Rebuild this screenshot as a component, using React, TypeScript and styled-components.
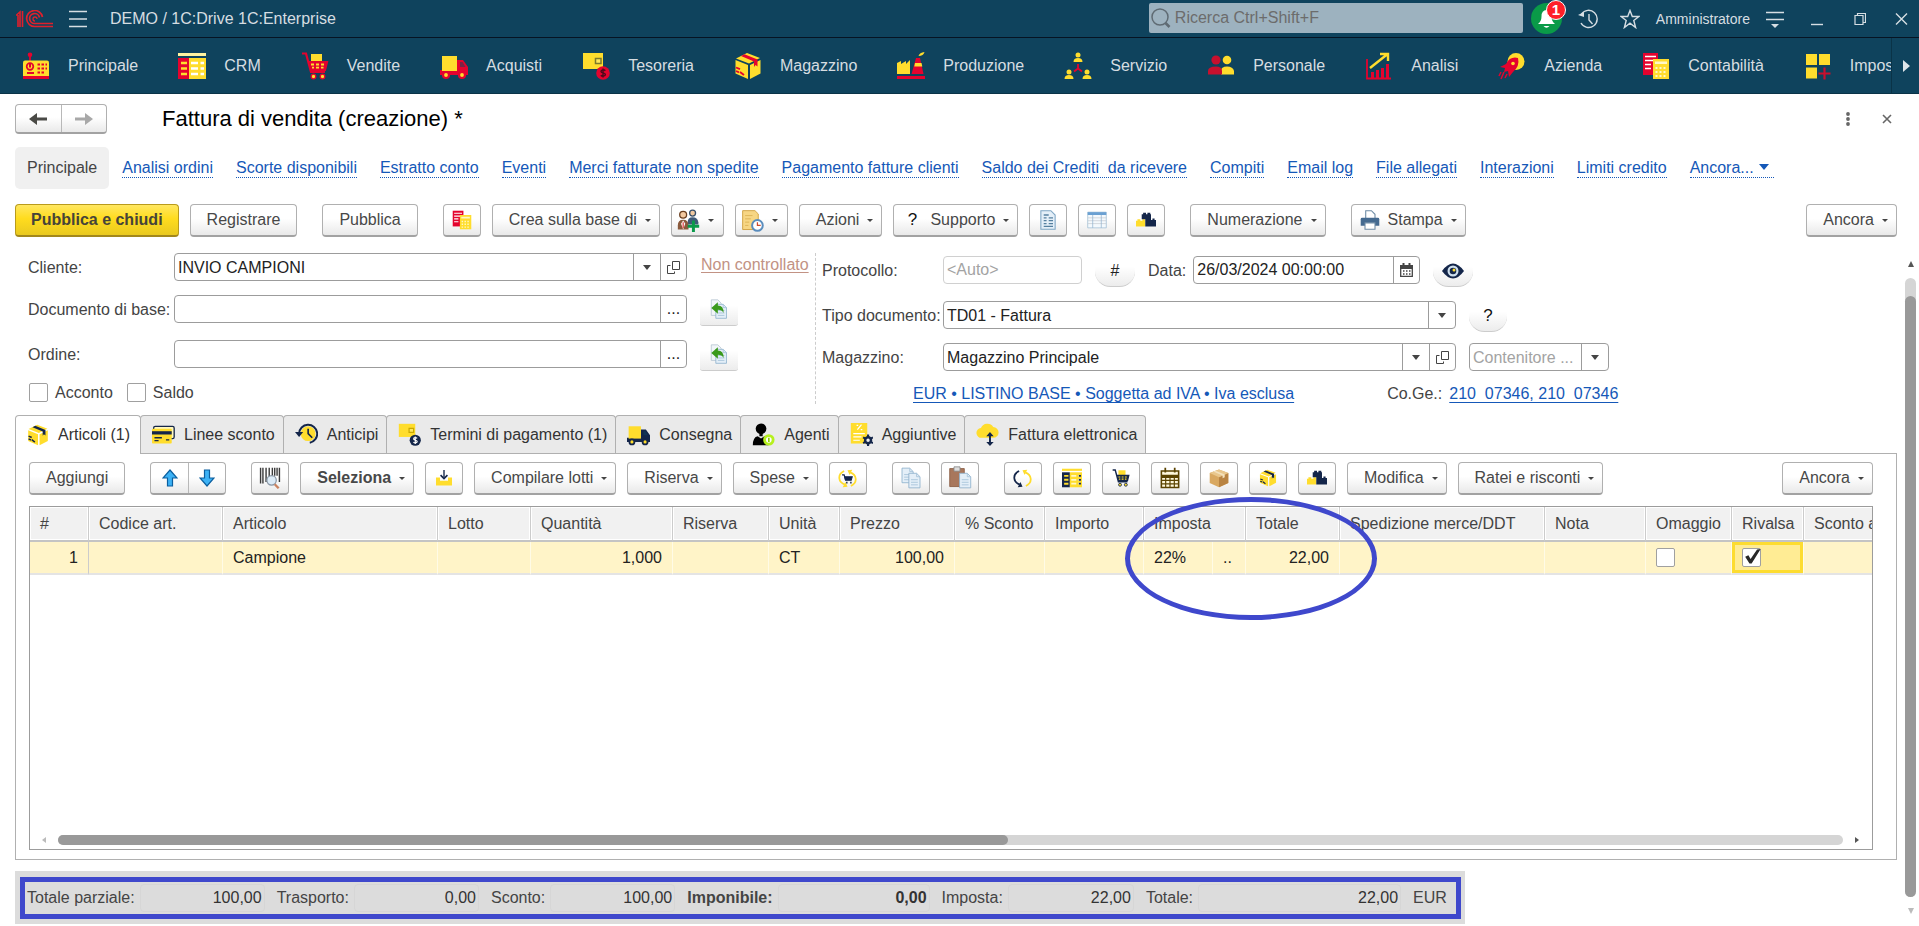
import React from "react";
import styled, { createGlobalStyle, css } from "styled-components";

const Y = "#ffdd2d";
const R = "#e4032e";
const N = "#14264a";
const BAR = "#0f435d";
const LINK = "#1558b8";

const GlobalStyle = createGlobalStyle`
  *, *::before, *::after { box-sizing: border-box; }
  body { margin: 0; background: #fff; overflow-x: hidden; }
  body, button, input, select, table { font-family: "Liberation Sans", Arial, sans-serif; font-size: 16px; color: #444; }
  svg { display: block; flex: none; }
`;

/* ---------- icons ---------- */

type Pal = { a?: string; b?: string };
type IconProps = Pal & { s?: number };

const Svg = ({ s = 28, children }: { s?: number; children: React.ReactNode }) => (
  <svg width={s} height={s} viewBox="0 0 28 28" fill="none" aria-hidden="true">{children}</svg>
);

const BoxIcon = ({ s, a = Y, b = R }: IconProps) => (
  <Svg s={s}>
    <path d="M13 1 26 6 15 11.500 2 6.500Z" fill={a} />
    <path d="M1.500 8 14 13v14L1.500 21.500Z" fill={a} />
    <path d="M16 13 26.500 8v13.500L16 27Z" fill={a} />
    <path d="M7 4 10.500 2.300 23.500 7.500v7l-2-1.500-1.500 2V9.500Z" fill={b} />
    <path d="M2 15.500l4 1.700M2 19l3 1.300M6 20l4 3" stroke={b} strokeWidth="1.900" />
  </Svg>
);
const TruckIcon = ({ s, a = Y, b = R }: IconProps) => (
  <Svg s={s}>
    <path d="M0 18h17V8h6l5 7v8H0Z" fill={b} />
    <path d="M2 4h15v15H2Z" fill={a} />
    <path d="M20 10h2.500l3 5H20Z" fill={BAR} opacity=".5" />
    <circle cx="6" cy="23" r="3" fill={a} stroke={b} strokeWidth="2.200" />
    <circle cx="22" cy="23" r="3" fill={a} stroke={b} strokeWidth="2.200" />
  </Svg>
);
const CartIcon = ({ s, a = Y, b = R }: IconProps) => (
  <Svg s={s}>
    <path d="M10 2h11v8H10Z" fill={a} />
    <path d="M1 1.500h4l5 18.500h14M7.500 10H26l-2 8H10" stroke={b} strokeWidth="2.200" />
    <path d="M8 10h18l-2 8H10Z" fill={b} />
    <path d="M10 12.500h3M15 12.500h3M20 12.500h3M11 15.700h2M15 15.700h3M20 15.700h2.500" stroke={a} strokeWidth="1.800" />
    <circle cx="12.500" cy="24.500" r="2.300" fill={a} stroke={b} strokeWidth="1.300" />
    <circle cx="21.500" cy="24.500" r="2.300" fill={a} stroke={b} strokeWidth="1.300" />
  </Svg>
);
const WalletIcon = ({ s, a = Y, b = R }: IconProps) => (
  <Svg s={s}>
    <path d="M1 1h20v16H1Z" fill={a} />
    <path d="M13.500 6.500h5.500v5h-5.500Z" fill="#ffe85c" stroke={b === R ? "#7d7a2a" : "#c9a900"} strokeWidth="1.500" />
    <circle cx="21" cy="21" r="6.800" fill={b} />
    <path d="M23.300 18.700c-1-1.300-4.300-1.200-4.300.7 0 1.900 4.400 1.200 4.400 3.200s-3.500 2-4.600.6M21 16.500v9" stroke={b === R ? "#4b0a1a" : "#fff"} strokeWidth="1.400" />
  </Svg>
);
const ListIcon = ({ s, a = Y, b = R }: IconProps) => (
  <Svg s={s}>
    <path d="M0 1h28v3H0Z" fill={b === R ? "#fff3a0" : a} />
    <path d="M0 6h11v21H0Z" fill={b} />
    <path d="M11 6h17v21H11Z" fill={a} />
    <path d="M3 11h6M3 16.500h6M3 22h6" stroke={a} strokeWidth="2.600" />
    <path d="M13 11h7M13 16.500h7M13 22h7M22.500 11H26M22.500 16.500H26M22.500 22H26" stroke={b === R ? "#fff" : "#fff8c8"} strokeWidth="2.400" />
    {b !== R && <path d="M23.500 11h3M23.500 16.500h3M23.500 22h3" stroke={b} strokeWidth="2.400" />}
  </Svg>
);
const DocCalcIcon = ({ s, a = Y, b = R }: IconProps) => (
  <Svg s={s}>
    <path d="M1 1h15v22H1Z" fill={b} />
    <path d="M3 4.500h11M3 8.500h11M3 12.500h6M3 16.500h6" stroke="#fff" strokeWidth="1.600" />
    <path d="M11 7h16v20H11Z" fill={a} />
    <path d="M13 9.500h12v2.500H13ZM13.500 15h2v2h-2zM17.500 15h2v2h-2zM21.500 15h2v2h-2zM13.500 19h2v2h-2zM17.500 19h2v2h-2zM21.500 19h2v2h-2zM13.500 23h2v2h-2zM17.500 23h2v2h-2zM21.500 23h2v2h-2z" fill="#fff8c8" />
  </Svg>
);
const DashboardIcon = () => (
  <Svg>
    <path d="M8 2v7" stroke={R} strokeWidth="1.800" />
    <circle cx="8" cy="2.800" r="2.300" fill={R} />
    <path d="M1 10.500q0-2 2-2h22q2 0 2 2V24H1Z" fill={Y} />
    <path d="M1 24h26v3H1Z" fill={R} />
    <circle cx="8" cy="14.500" r="3.300" stroke={R} strokeWidth="1.700" />
    <path d="M8 12v3.500M5 21h7" stroke={R} strokeWidth="2" />
    <path d="M15.500 12.500h2.500M19.500 12.500H22M23.500 12.500H25M15.500 16.500h2.500M19.500 16.500H22M23.500 16.500H25M15.500 20.500h2.500M19.500 20.500H22" stroke={R} strokeWidth="2" />
  </Svg>
);
const FactoryIcon = () => (
  <Svg>
    <path d="M0 22V11l4-2v3l5-3v3l4-4v14Z" fill={Y} />
    <path d="M14.500 22 19 6h4l3.500 16Z" fill={R} />
    <path d="M18 11h6.500l.8 3.500h-8Z" fill={Y} />
    <path d="M0 24h28v3H0Z" fill={R} />
    <path d="M21.500 4q1-3.500 6-4-1 4-6 4Z" fill={Y} />
  </Svg>
);
const ServiceIcon = () => (
  <Svg>
    {[[14, 0], [5, 17], [23, 17]].map(([x, y]) => (
      <g key={x} fill={Y}>
        <circle cx={x} cy={y + 3} r="2.500" />
        <path d={`M${x - 4.500} ${y + 10}q0-4 4.500-4t4.500 4Z`} />
      </g>
    ))}
    <path d="M14 12v4.500l-4 3M14 16.500l4 3" stroke={R} strokeWidth="1.800" />
  </Svg>
);
const PeopleIcon = () => (
  <Svg>
    <circle cx="20" cy="8" r="4.300" fill={Y} />
    <path d="M14 22.500V19q0-4.500 6-4.500t7 4.500v3.500Z" fill={Y} />
    <circle cx="9" cy="8" r="4.600" fill="#c8102e" />
    <path d="M1 22.500V19q0-4.500 8-4.500 6 0 6 4.500v3.500Z" fill="#c8102e" />
  </Svg>
);
const ChartIcon = () => (
  <Svg>
    <path d="M2 7v19.500h24" stroke={R} strokeWidth="1.800" />
    <path d="M6 20h3v6H6zM11 18h3v8h-3zM16 16h3v10h-3zM21 12h3v14h-3z" fill={R} />
    <path d="M5 16 22 2.500M15 2h8v7" stroke={Y} strokeWidth="2.400" />
  </Svg>
);
const RocketIcon = () => (
  <Svg>
    <circle cx="18" cy="9.500" r="8.500" fill={Y} />
    <path d="M20 6q-8-2-12 6l-6 3 5 1-1 4 4-1 1 6 4-5q7-6 5-14Z" fill={R} />
    <circle cx="15" cy="11.500" r="1.800" fill={Y} />
    <path d="m6 20-3 7M3 20l-2 4M9 22l-2 4" stroke={R} strokeWidth="1.500" />
  </Svg>
);
const TilesIcon = () => (
  <Svg>
    <path d="M2 2h11v11H2zM15 2h11v11H15zM2 15.500h11v11H2z" fill={Y} />
    <path d="M20.500 15.500v12M14.500 21.500h12" stroke="#c8102e" strokeWidth="2.200" />
  </Svg>
);
const BricksIcon = ({ s = 20 }: IconProps) => (
  <Svg s={s}>
    <path d="M0 23v-8h2v-2h4v2h3v-2h4v10Z" fill={Y} />
    <path d="M8 13V6h2V4h4v2h2V4h4v2h1v8h2v-2h3v2h2v9H13V13Z" fill={N} />
  </Svg>
);
const CardIcon = () => (
  <Svg s={23}>
    <rect x="2" y="4" width="25" height="15" rx="2" stroke={N} strokeWidth="1.600" fill="#fff7c0" />
    <rect x="0" y="7" width="24" height="18" rx="1" fill={Y} />
    <path d="M0 10h24v4H0Z" fill={N} />
    <path d="M3 18h9M3 21.500h5M17 20.500h4" stroke={N} strokeWidth="1.700" />
  </Svg>
);
const HistoryYIcon = () => (
  <Svg s={23}>
    <circle cx="16" cy="13" r="9" fill={Y} />
    <path d="M5 13A11 11 0 1 1 18 24" stroke={N} strokeWidth="2.400" />
    <path d="M0 11h10l-5 6Z" fill={N} />
    <path d="M16 7v6l5 5" stroke={N} strokeWidth="2" />
  </Svg>
);
const AgentIcon = () => (
  <Svg s={23}>
    <circle cx="11" cy="7" r="6.500" fill="#000" />
    <path d="M9 11h4v5H9ZM1 27q0-10 6-11l4 3 4-3q5 1 5 5v6Z" fill="#000" />
    <circle cx="20.500" cy="20.500" r="5.200" fill="#fff" stroke="#b6f01e" strokeWidth="3.500" />
    <path d="M20.500 18v5" stroke="#8ccc00" strokeWidth="2" />
  </Svg>
);
const ExtraIcon = () => (
  <Svg s={23}>
    <path d="M1 0h20v25H1Z" fill={Y} />
    <path d="m9 8 5-6M8 3h2M13 8h2M4 13h14M4 17h10M4 21h8" stroke="#fff" strokeWidth="1.500" />
    <path d="M22 14v14M16 17.500l12 7M16 24.500l12-7" stroke={N} strokeWidth="2.600" />
    <circle cx="22" cy="21" r="3.600" stroke={N} strokeWidth="3" fill="#eee" />
  </Svg>
);
const CloudIcon = () => (
  <Svg s={23}>
    <path d="M7 18a6 6 0 0 1-1-12 8.500 8.500 0 0 1 15-1 6.500 6.500 0 0 1 0 13Z" fill={Y} />
    <path d="M17 13v12" stroke={N} strokeWidth="2.400" />
    <path d="m12.500 16 4.500-5 4.500 5ZM12.500 23h9L17 28Z" fill={N} />
  </Svg>
);
const ArrowVIcon = ({ down }: { down?: boolean }) => (
  <svg width="16" height="18" viewBox="0 0 16 18" aria-hidden="true">
    <path d={down ? "M5.500 1h5v8H15l-7 8-7-8h4.500Z" : "M5.500 17h5V9H15L8 1 1 9h4.500Z"} fill="#3db2f5" stroke="#0b5f9f" strokeWidth="1.200" />
  </svg>
);
const BarcodeIcon = () => (
  <Svg s={22}>
    <path d="M2 1v20M5 1v20M9 1v18M13 1v14M17 1v10M20 1v10M23 1v10M26 1v18" stroke="#3c3c3c" strokeWidth="1.800" />
    <circle cx="16" cy="17" r="6" fill="#dcebf7" stroke="#8a97a5" strokeWidth="1.600" />
    <path d="m20 22 5 5" stroke="#c98260" strokeWidth="3" />
  </Svg>
);
const DownloadIcon = () => (
  <Svg s={16}>
    <path d="M0 13h7v6h14v-6h7v14H0Z" fill={Y} />
    <path d="M14 0v13" stroke={N} strokeWidth="2.400" />
    <path d="m8 9 6 6 6-6" stroke={N} strokeWidth="2.800" />
  </Svg>
);
const RefreshIcon = ({ cart }: { cart?: boolean }) => (
  <Svg s={19}>
    <path d="M9 3Q1 7 2 14q.5 6 8 9" stroke={cart ? Y : N} strokeWidth="2.600" />
    <path d="m7 27 7-1-3-7Z" fill={cart ? Y : N} />
    <path d="M19 25q8-4 7-11-.5-6-8-9" stroke={Y} strokeWidth="2.600" />
    <path d="m21 1-7 1 3 7Z" fill={Y} />
    {cart && (
      <g stroke={N}>
        <path d="M6 8.500h3l2 7" strokeWidth="1.800" />
        <path d="M10 11.500h11l-1.500 5H11Z" fill={N} strokeWidth="1.500" />
        <path d="M12 20h2M18 20h2" strokeWidth="2.400" />
      </g>
    )}
  </Svg>
);
const Sheet = ({ x, y }: { x: number; y: number }) => (
  <g transform={`translate(${x} ${y})`}>
    <path d="M.5.500h9l4 4v13H.5Z" fill="#e4eff8" stroke="#8fb2cd" />
    <path d="M9.500.500v4h4M3 8h8M3 11h8M3 14h8" stroke="#a5c2d8" />
  </g>
);
const CopyIcon = () => <Svg s={24}><Sheet x={3} y={2} /><Sheet x={11} y={8} /></Svg>;
const PasteIcon = () => (
  <Svg s={24}>
    <path d="M2 3h17v21H2Z" fill="#a8775c" stroke="#8b5d44" />
    <path d="M7 1h7v5H7Z" fill="#ddd" stroke="#888" />
    <Sheet x={13} y={8} />
  </Svg>
);
const DocIcon = () => (
  <Svg s={20}>
    <path d="M4 1h14l6 6v20H4Z" fill="#e4eff8" stroke="#7fa6c4" strokeWidth="1.500" />
    <path d="M8 7h7M8 11h4M15 11h6M8 15h4M15 15h6M8 19h4M15 19h6M8 23h13" stroke="#55809f" strokeWidth="1.800" />
  </Svg>
);
const GridIcon = () => (
  <Svg s={20}>
    <path d="M1 3h26v22H1Z" fill="#f4f9fd" stroke="#9ab8d0" />
    <path d="M1 3h26v4H1Z" fill="#6aa0d2" />
    <path d="M1 11h26M1 15h26M1 19h26" stroke="#c6cbd2" />
    <path d="M8 7v18M20 7v18" stroke="#8fb2cd" />
  </Svg>
);
const CalendarIcon = () => (
  <Svg s={22}>
    <path d="M3 5h22v6H3ZM3 13h22v13H3Z" stroke="#5b4300" strokeWidth="2" fill="#fff8dc" />
    <path d="M8 1v6M20 1v6" stroke="#5b4300" strokeWidth="2.200" />
    <path d="M3 17h22M3 21.500h22M8.500 13v13M14 13v13M19.500 13v13" stroke="#5b4300" strokeWidth="1.500" />
  </Svg>
);
const ParcelIcon = () => (
  <Svg s={20}>
    <path d="M14 2 27 7v14l-13 6L1 21V7Z" fill="#d9a860" />
    <path d="m14 13 13-6v14l-13 6Z" fill="#b98443" />
    <path d="M14 2 27 7l-13 6L1 7Z" fill="#e9c78c" />
    <path d="m6 5 13 5.500v4l3-1.500V9L9 4Z" fill="#f4e2bd" />
  </Svg>
);
const UsersAddIcon = () => (
  <Svg s={23}>
    <circle cx="19" cy="5" r="3.600" fill="#f0c8a0" stroke="#39506a" strokeWidth="1.600" />
    <path d="M13 19v-3q0-6 6-6t7 6v3Z" fill="#3f5a78" />
    <circle cx="7.500" cy="7" r="4.200" fill="#f3c9a0" stroke="#6b3f20" strokeWidth="1.600" />
    <path d="M1 25v-5q0-7 6.500-7t6.500 7v5Z" fill="#8a5a3c" />
    <path d="m7.500 14 2.500 4-2.500 7L5 18Z" fill="#fff" />
    <path d="M7.500 16v7" stroke="#d33" strokeWidth="1.400" />
    <path d="M20 14v14M13 21h14" stroke="#0a9a4a" strokeWidth="3.600" />
  </Svg>
);
const ScrollClockIcon = () => (
  <Svg s={23}>
    <path d="M2 2h15l4 4v19H2Z" fill="#f7d684" stroke="#d2a548" strokeWidth="1.200" />
    <path d="M5 8h9M5 12h7M5 16h5M5 20h4" stroke="#d9ae50" />
    <circle cx="20" cy="20" r="6.500" fill="#fff" stroke="#5a8dbd" strokeWidth="2.400" />
    <path d="M20 16v4h4" stroke="#d04a2a" strokeWidth="1.500" />
  </Svg>
);
const PrinterIcon = () => (
  <Svg s={20}>
    <path d="M8 1h8l5 5v7H8Z" fill="#fff" stroke="#6d8ba5" strokeWidth="1.500" />
    <path d="M1 13q0-2 2-2h22q2 0 2 2v9H1Z" fill="#446a90" />
    <path d="M7 18h14v9H7Z" fill="#fff" stroke="#6d8ba5" strokeWidth="1.500" />
  </Svg>
);
const DocBackIcon = () => (
  <Svg s={23}>
    <path d="M4 1h8l4 4v15H4Z" fill="#f1f5f8" stroke="#b7c6d2" />
    <Sheet x={9} y={6} />
    <path d="M4 11 12 4v4q7 0 7 9-2-4-7-4v5Z" fill="#3a9a1c" />
  </Svg>
);
const EyeIcon = () => (
  <svg width="22" height="16" viewBox="0 0 22 16" aria-hidden="true">
    <path d="M0 8Q11-7 22 8 11 23 0 8Z" fill={N} />
    <circle cx="11" cy="8" r="5.500" fill="#cfe0ee" />
    <circle cx="11" cy="8" r="3.300" fill={N} />
    <circle cx="12" cy="7" r="1.500" fill={Y} />
  </svg>
);
const MiniCalIcon = () => (
  <svg width="13" height="14" viewBox="0 0 13 14" fill="none" aria-hidden="true">
    <path d="M.7 3h11.600v10.300H.7Z" stroke="#444" strokeWidth="1.300" />
    <path d="M0 2h13v4H0ZM2.500 0h2v3h-2zM8.500 0h2v3h-2z" fill="#444" />
    <path d="M3 8h1.500M6 8h1.500M9 8h1.500M3 11h1.500M6 11h1.500M9 11h1.500" stroke="#444" strokeWidth="1.500" />
  </svg>
);
const OpenIcon = () => (
  <svg width="13" height="13" viewBox="0 0 13 13" fill="none" stroke="#444" aria-hidden="true">
    <path d="M5.500.500h7v8h-7ZM3.500 4.500h-3v8h7v-2" />
  </svg>
);
const NavArrow = ({ right }: { right?: boolean }) => (
  <svg width="18" height="14" viewBox="0 0 18 14" aria-hidden="true">
    <path d={right ? "M0 5.500h10V1l8 6-8 6V8.500H0Z" : "M18 5.500H8V1L0 7l8 6V8.500h10Z"} fill={right ? "#a8a8a8" : "#4a4a46"} />
  </svg>
);
const Logo = () => (
  <svg width="37" height="18" viewBox="0 0 37 18" fill="none" stroke="#e0202c" aria-label="1C">
    <path d="M0 5.500 4 2v15M2 5v12M6.500 1v16" strokeWidth="1.600" />
    <path d="M26.500 7A8 8 0 1 0 19 16.500h18" strokeWidth="1.700" />
    <path d="M23.500 7.500a5 5 0 1 0-4.500 6h18" strokeWidth="1.700" />
    <path d="M21 9a2 2 0 1 0-2 2" strokeWidth="1.300" />
  </svg>
);
const TopGlyph = ({ children, w = 20 }: { children: React.ReactNode; w?: number }) => (
  <svg width={w} height="20" viewBox={`0 0 ${w} 20`} fill="none" stroke="#d6dee3" strokeWidth="1.400" aria-hidden="true">{children}</svg>
);

/* ---------- header ---------- */

const TopBar = styled.header`
  display: flex; align-items: center; height: 38px; padding: 0 11px 0 16px;
  background: ${BAR}; border-bottom: 1px solid #061423; color: #dbe2e6;
`;
const Ghost = styled.button<{ $ml?: number }>`
  display: flex; align-items: center; justify-content: center;
  margin: 0 0 0 ${p => p.$ml ?? 0}px; padding: 0; border: 0; background: none; color: inherit; cursor: pointer;
`;
const AppName = styled.span`margin-left: 23px; color: #d6dde1;`;
const Search = styled.label`
  display: flex; align-items: center; gap: 4px; width: 374px; height: 30px; padding-left: 2px; margin: 0 8px 1px auto;
  border-radius: 2px; background: #9db2bf;
`;
const SearchInput = styled.input`
  flex: 1; min-width: 0; border: 0; padding: 0; background: none; outline: 0;
  &::placeholder { color: #6c6c6c; opacity: 1; }
`;
const Bell = styled.button`
  position: relative; display: flex; align-items: center; justify-content: center;
  width: 31px; height: 31px; padding: 0; border: 0; border-radius: 50%; background: #0a9a48;
`;
const Badge = styled.span`
  position: absolute; top: -3px; right: -4px; width: 20px; height: 20px; border-radius: 50%; border: 1px solid #fff;
  background: #ff1f28; color: #fff; font-size: 15px; font-weight: bold; line-height: 18px; text-align: center;
`;
const UserLink = styled.a`margin-left: 16px; color: #d6dde1; font-size: 14px; text-decoration: none;`;

const NavBar = styled.nav`
  display: flex; height: 56px; background: ${BAR}; border-bottom: 1px solid #0a3347;
`;
const NavList = styled.div`flex: 1; min-width: 0; display: flex; overflow: hidden;`;
const NavItem = styled.a`
  flex: none; display: flex; align-items: center; gap: 18px; padding: 0 18px 0 22px; color: #d6dde1; text-decoration: none; white-space: nowrap;
`;
const NavMore = styled.button`
  width: 28px; border: 0; border-left: 1px solid #0a3347; background: none; padding: 0 0 0 11px;
`;

/* ---------- page ---------- */

const Page = styled.main`padding: 10px 0 2px 15px;`;
const TitleRow = styled.div`display: flex; align-items: center; height: 30px; margin-right: 23px;`;
const Title = styled.h1`margin: 0 auto 0 55px; font-size: 22px; font-weight: normal; color: #000;`;
const face = css`
  border: 1px solid #b0b0b0; border-bottom: 2px solid #a2a2a2; border-radius: 4px;
  background: linear-gradient(#fff 45%, #e9e9e9);
`;
const Pair = styled.div<{ $w: number; $h: number; $gap?: boolean }>`
  display: flex; width: ${p => p.$w}px; height: ${p => p.$h}px; margin-left: ${p => (p.$gap ? 14 : 0)}px; ${face}
`;
const PairButton = styled.button`
  flex: 1; display: flex; align-items: center; justify-content: center; padding: 0; border: 0; background: none;
  & + & { border-left: 1px solid #b8b8b8; }
`;
const SectionNav = styled.nav`display: flex; align-items: center; gap: 23px; height: 42px; margin: 13px 22px 15px 0; white-space: nowrap;`;
const SectionActive = styled.span`margin-right: -10px; padding: 12px; border-radius: 5px; background: #f0f0f0; line-height: 18px; color: #444;`;
const SectionLink = styled.a`
  color: ${LINK}; text-decoration: none; line-height: 18px; border-bottom: 1px dotted ${LINK}; white-space: pre;
`;

const Toolbar = styled.div<{ $inset?: boolean }>`
  display: flex; align-items: center; gap: 11px; margin-right: ${p => (p.$inset ? 22 : 0)}px;
`;
const Btn = styled.button<{ $kind?: "primary" | "icon" | "iconMenu" | "menu" | "iconText"; $gap?: boolean; $bold?: boolean; $push?: boolean }>`
  flex: none; display: flex; align-items: center; justify-content: center; gap: 8px; height: 33px; white-space: nowrap;
  padding: 0 16px; color: #484848; ${face}
  font-weight: ${p => (p.$bold || p.$kind === "primary" ? "bold" : "normal")};
  ${p => p.$gap && "margin-left: 14px;"}
  ${p => p.$push && "margin-left: auto;"}
  ${p => p.$kind === "icon" && "width: 38px; padding: 0;"}
  ${p => p.$kind === "iconMenu" && "width: 53px; padding: 0 3px 0 0;"}
  ${p => p.$kind === "menu" && "padding: 0 8px 0 16px;"}
  ${p => p.$kind === "iconText" && "padding: 0 8px;"}
  ${p => p.$kind === "primary" && css`
    padding: 0 15px; border-color: #b99b1c; border-bottom-color: #a2871c; background: linear-gradient(#ffe761, #ffdc1e 45%, #e9c920); color: #46443a;
  `}
`;
const Caret = styled.span<{ $big?: boolean; $link?: boolean }>`
  flex: none; display: inline-block; border: solid transparent; border-bottom: 0;
  border-width: ${p => (p.$link ? "6px 5px 0" : p.$big ? "5px 4px 0" : "3px 3px 0")};
  border-top-color: ${p => (p.$link ? LINK : "#444")};
  ${p => p.$link && "margin: 0 5px 3px;"}
`;
const Mark = styled.span`width: 20px; color: #111; font-size: 17px; text-align: center;`;

/* ---------- form ---------- */

const Body = styled.div`display: flex; margin-top: 16px;`;
const Main = styled.div`flex: 1; min-width: 0;`;
const Form = styled.div`display: flex;`;
const LeftCol = styled.div`
  flex: none; width: 801px; padding-left: 13px; border-right: 1px dashed #ccc;
  display: grid; grid-template-columns: 146px 513px 1fr; grid-template-rows: 42px 45px 43px 21px; align-items: start;
`;
const RightCol = styled.div`
  padding: 3px 0 0 6px;
  display: grid; grid-template-columns: 121px 1fr; grid-template-rows: 45px 42px 41px 20px; align-items: start;
`;
const Label = styled.label`line-height: 29px; white-space: nowrap;`;
const Line = styled.div<{ $gap?: number; $indent?: boolean }>`
  display: flex; align-items: flex-start; gap: ${p => p.$gap ?? 13}px; padding-left: ${p => (p.$indent ? 13 : 0)}px;
`;
const Field = styled.div<{ $w: number; $light?: boolean }>`
  display: flex; width: ${p => p.$w}px; height: 28px; border: 1px solid ${p => (p.$light ? "#d0d0d0" : "#9c9c9c")}; border-radius: 4px; background: #fff; overflow: hidden;
`;
const TextInput = styled.input`
  flex: 1; min-width: 0; padding: 0 3px; border: 0; outline: 0; background: none; color: #222;
  &::placeholder { color: #a3a3a3; opacity: 1; }
`;
const Select = styled.select<{ $muted?: boolean }>`
  flex: 1; min-width: 0; appearance: none; padding: 0 26px 0 3px; border: 0; outline: 0; background: none; color: ${p => (p.$muted ? "#a3a3a3" : "#222")};
`;
const DropCell = styled.span`
  width: 27px; margin-left: -27px; display: flex; align-items: center; justify-content: center; border-left: 1px solid #9c9c9c; pointer-events: none;
`;
const CellButton = styled.button`
  width: 26px; padding: 0; display: flex; align-items: center; justify-content: center; border: 0; border-left: 1px solid #9c9c9c; background: none; color: #222;
`;
const SoftButton = styled.button<{ $round?: boolean; $w?: number }>`
  display: flex; align-items: center; justify-content: center; width: ${p => p.$w ?? 38}px; height: 31px; padding: 0;
  border: 0; border-bottom: 1px solid #ccc; border-radius: ${p => (p.$round ? "16px" : "3px")};
  background: linear-gradient(#fff 35%, #ececec); color: #222;
`;
const Unchecked = styled.a`
  margin-left: 14px; color: #c29284; line-height: 24px; text-underline-offset: 2px; white-space: nowrap;
`;
const Checks = styled.div`grid-column: 1 / -1; display: flex; gap: 14px; padding-left: 1px;`;
const CheckLabel = styled.label`display: flex; align-items: center; gap: 7px;`;
const Check = styled.input`
  appearance: none; display: grid; flex: none; width: 19px; height: 19px; margin: 0; border: 1px solid #a0a0a0; border-radius: 2px; background: #fff;
  &:checked::before {
    content: ""; width: 18px; height: 15px; background: #282828;
    clip-path: polygon(12% 52%, 30% 42%, 42% 66%, 78% 4%, 98% 0, 48% 96%, 36% 96%);
  }
`;
const PlainLink = styled.a`color: ${LINK}; line-height: 20px; text-underline-offset: 3px; white-space: pre; text-decoration-skip-ink: none;`;
const LinkRow = styled.div`grid-column: 1 / -1; display: flex; padding-left: 91px;`;
const CoGe = styled.span`margin: 0 7px 0 93px; line-height: 20px;`;

/* ---------- tabs and grid ---------- */

const Tabs = styled.div`display: flex; height: 38px; margin-top: 11px;`;
const Tab = styled.button<{ $on?: boolean }>`
  display: flex; align-items: center; gap: 9px; padding: 0 8px 0 11px; white-space: nowrap; color: #333;
  border: 1px solid #b0b0b0; border-bottom: 0; border-radius: 4px 4px 0 0; background: #eaeaea;
  & + & { margin-left: -1px; }
  ${p => p.$on && "position: relative; height: 39px; padding-right: 10px; background: #fff;"}
`;
const Panel = styled.section`border: 1px solid #b0b0b0; padding: 8px 23px 9px 13px;`;
const GridWrap = styled.div`position: relative; margin-top: 11px;`;
const Grid = styled.div`
  display: flex; flex-direction: column; min-height: 344px; overflow: hidden; border: 1px solid #9c9c9c;
`;
const Table = styled.table`
  flex: none; table-layout: fixed; width: 1924px; min-width: 100%; border-collapse: separate; border-spacing: 0;
`;
const Th = styled.th`
  height: 35px; padding: 0 10px; border-right: 1px solid #ccc; border-bottom: 2px solid #c4c4c4; background: #f1f1f1;
  font-weight: normal; text-align: left; white-space: nowrap;
  box-shadow: inset 1px 1px 0 #fff, inset -1px -1px 0 #fff;
`;
const Td = styled.td<{ $right?: boolean; $active?: boolean; $first?: boolean }>`
  height: 33px; padding: 0 10px; text-align: ${p => (p.$right ? "right" : "left")}; white-space: nowrap; color: #222;
  border-right: 1px solid ${p => (p.$first ? "#ccc" : "#fffbe6")}; border-bottom: 2px solid #e4e4e4; background: #fff4c8;
  ${p => p.$active && "background: #ffec94; box-shadow: inset 0 0 0 3px #fddc30;"}
`;
const HScroll = styled.div`display: flex; align-items: center; gap: 11px; margin-top: auto; padding: 0 12px 4px 11px;`;
const HTrack = styled.div`flex: 1; height: 10px; border-radius: 5px; background: #d5d5d5;`;
const HThumb = styled.div`width: 53.200%; height: 10px; border-radius: 5px; background: #999;`;
const Ellipse = styled.div`
  position: absolute; left: 1096px; top: -9px; width: 252px; height: 123px; border: 5px solid #3f48cc; border-radius: 50%; pointer-events: none;
`;

const Totals = styled.footer`width: fit-content; margin-top: 11px; padding: 6px 4px 5px 5px; background: #dcdcdc;`;
const TotalsFrame = styled.div`display: flex; align-items: center; height: 42px; padding: 0 9px 0 2px; border: 5px solid #3f48cc;`;
const Total = styled.label<{ $bold?: boolean }>`
  display: flex; align-items: center; gap: 5px; margin-right: 12px; white-space: nowrap; font-weight: ${p => (p.$bold ? "bold" : "normal")};
`;
const TotalValue = styled.output<{ $w: number }>`
  width: ${p => p.$w}px; height: 28px; padding-right: 2px; border: 1px solid #d6d6d6; border-radius: 4px; line-height: 26px; text-align: right; color: #333;
`;

const VScroll = styled.div`display: flex; flex-direction: column; align-items: center; gap: 11px; width: 22px; padding: 8px 0 10px 5px;`;
const VTrack = styled.div`flex: 1; width: 11px; padding-top: 18px; border-radius: 6px; background: #d5d5d5;`;
const VThumb = styled.div`height: 100%; border-radius: 6px; background: #999;`;
const Tri = ({ d, c = "#555" }: { d: string; c?: string }) => (
  <svg width="6" height="6" viewBox="0 0 6 6" aria-hidden="true"><path d={d} fill={c} /></svg>
);

/* ---------- data ---------- */

const modules: [string, React.ReactNode][] = [
  ["Principale", <DashboardIcon />], ["CRM", <ListIcon />], ["Vendite", <CartIcon />], ["Acquisti", <TruckIcon />],
  ["Tesoreria", <WalletIcon />], ["Magazzino", <BoxIcon />], ["Produzione", <FactoryIcon />], ["Servizio", <ServiceIcon />],
  ["Personale", <PeopleIcon />], ["Analisi", <ChartIcon />], ["Azienda", <RocketIcon />], ["Contabilità", <DocCalcIcon />],
  ["Impostazioni", <TilesIcon />],
];
const sections = [
  "Analisi ordini", "Scorte disponibili", "Estratto conto", "Eventi", "Merci fatturate non spedite", "Pagamento fatture clienti",
  "Saldo dei Crediti  da ricevere", "Compiti", "Email log", "File allegati", "Interazioni", "Limiti credito",
];
const tabs: [string, React.ReactNode][] = [
  ["Articoli (1)", <BoxIcon s={22} b={N} />], ["Linee sconto", <CardIcon />], ["Anticipi", <HistoryYIcon />],
  ["Termini di pagamento (1)", <WalletIcon s={23} b={N} />], ["Consegna", <TruckIcon s={23} b={N} />], ["Agenti", <AgentIcon />],
  ["Aggiuntive", <ExtraIcon />], ["Fattura elettronica", <CloudIcon />],
];
const colWidths = [59, 134, 215, 93, 142, 96, 71, 115, 90, 99, 69, 33, 94, 205, 101, 86, 72, 150];
const headers = [
  "#", "Codice art.", "Articolo", "Lotto", "Quantità", "Riserva", "Unità", "Prezzo", "% Sconto", "Importo", "Imposta", "Totale",
  "Spedizione merce/DDT", "Nota", "Omaggio", "Rivalsa", "Sconto a",
];
const totals: [string, string, number, boolean?][] = [
  ["Totale parziale:", "100,00", 125], ["Trasporto:", "0,00", 125], ["Sconto:", "100,00", 125], ["Imponibile:", "0,00", 152, true],
  ["Imposta:", "22,00", 126], ["Totale:", "22,00", 203],
];

const Menu = ({ children, gap, bold, push }: { children: string; gap?: boolean; bold?: boolean; push?: boolean }) => (
  <Btn $kind="menu" $gap={gap} $bold={bold} $push={push}>{children}<Caret /></Btn>
);
const IconBtn = ({ label, gap, children }: { label: string; gap?: boolean; children: React.ReactNode }) => (
  <Btn $kind="icon" $gap={gap} aria-label={label}>{children}</Btn>
);

export default function App() {
  return (
    <>
      <GlobalStyle />
      <TopBar>
        <Logo />
        <Ghost $ml={16} aria-label="Menu"><TopGlyph w={18}><path d="M0 2.500h18M0 10h18M0 17.500h18" /></TopGlyph></Ghost>
        <AppName>DEMO / 1C:Drive 1C:Enterprise</AppName>
        <Search>
          <svg width="20" height="20" viewBox="0 0 20 20" fill="none" stroke="#5f6b73" aria-hidden="true">
            <circle cx="9" cy="9" r="8" strokeWidth="1.500" /><path d="m14.500 15 4 4" strokeWidth="2.600" />
          </svg>
          <SearchInput placeholder="Ricerca Ctrl+Shift+F" aria-label="Ricerca" />
        </Search>
        <Bell aria-label="Notifiche">
          <svg width="19" height="20" viewBox="0 0 19 20" fill="#fff" aria-hidden="true"><path d="M9.500 1q5 0 5 6.500Q14.500 12 18 15H1q3.500-3 3.500-7.500Q4.500 1 9.500 1ZM6.500 17h6q-3 3.500-6 0Z" /></svg>
          <Badge>1</Badge>
        </Bell>
        <Ghost $ml={16} aria-label="Cronologia"><TopGlyph><path d="M3.500 5A8.600 8.600 0 1 1 3 14M11 5v6l3.500 4" /><path d="m0 6 6 2V3Z" fill="#d6dee3" stroke="none" /></TopGlyph></Ghost>
        <Ghost $ml={22} aria-label="Preferiti"><TopGlyph><path d="m10 1.500 2.300 6h6.700l-5.200 4 1.800 7-5.600-4.300L4.400 18.500l1.800-7L1 7.500h6.700Z" /></TopGlyph></Ghost>
        <UserLink href="#user">Amministratore</UserLink>
        <Ghost $ml={16} aria-label="Opzioni"><TopGlyph w={18}><path d="M0 3.500h18M0 10.500h18" /><path d="M5 15h8l-4 4Z" fill="#d6dee3" stroke="none" /></TopGlyph></Ghost>
        <Ghost $ml={27} aria-label="Riduci"><TopGlyph w={12}><path d="M0 15.500h12" /></TopGlyph></Ghost>
        <Ghost $ml={31} aria-label="Ripristina"><TopGlyph w={12}><path d="M1 6.500h8v9H1ZM3.500 6.500v-2h8v9H9" strokeWidth="1.200" /></TopGlyph></Ghost>
        <Ghost $ml={29} aria-label="Chiudi"><TopGlyph w={13}><path d="m1 4.500 11 11M12 4.500l-11 11" /></TopGlyph></Ghost>
      </TopBar>
      <NavBar>
        <NavList>
          {modules.map(([name, icon]) => <NavItem key={name} href={`#${name}`}>{icon}{name}</NavItem>)}
        </NavList>
        <NavMore aria-label="Avanti"><svg width="7" height="12" viewBox="0 0 7 12"><path d="M0 0v12l7-6Z" fill="#dfe6ea" /></svg></NavMore>
      </NavBar>

      <Page>
        <TitleRow>
          <Pair $w={92} $h={30}>
            <PairButton aria-label="Indietro"><NavArrow /></PairButton>
            <PairButton aria-label="Avanti"><NavArrow right /></PairButton>
          </Pair>
          <Title>Fattura di vendita (creazione) *</Title>
          <Ghost aria-label="Altro">
            <svg width="4" height="14" viewBox="0 0 4 14" fill="#666"><circle cx="2" cy="2" r="1.900" /><circle cx="2" cy="7" r="1.900" /><circle cx="2" cy="12" r="1.900" /></svg>
          </Ghost>
          <Ghost $ml={32} aria-label="Chiudi scheda">
            <svg width="14" height="10" viewBox="0 0 14 10" stroke="#666" strokeWidth="1.600"><path d="m1 1 8 8M9 1 1 9" /></svg>
          </Ghost>
        </TitleRow>

        <SectionNav>
          <SectionActive>Principale</SectionActive>
          {sections.map(s => <SectionLink key={s} href="#sezione">{s}</SectionLink>)}
          <SectionLink href="#ancora">Ancora...<Caret $link /></SectionLink>
        </SectionNav>

        <Toolbar $inset>
          <Btn $kind="primary">Pubblica e chiudi</Btn>
          <Btn>Registrare</Btn>
          <Btn $gap>Pubblica</Btn>
          <IconBtn gap label="Registrazioni"><DocCalcIcon s={20} /></IconBtn>
          <Menu>Crea sulla base di</Menu>
          <Btn $kind="iconMenu" aria-label="Contatti"><UsersAddIcon /><Caret /></Btn>
          <Btn $kind="iconMenu" aria-label="Promemoria"><ScrollClockIcon /><Caret /></Btn>
          <Menu>Azioni</Menu>
          <Btn $kind="iconText"><Mark>?</Mark>Supporto<Caret /></Btn>
          <IconBtn label="Documento"><DocIcon /></IconBtn>
          <IconBtn label="Elenco"><GridIcon /></IconBtn>
          <IconBtn label="Moduli"><BricksIcon /></IconBtn>
          <Menu gap>Numerazione</Menu>
          <Btn $kind="iconText" $gap><PrinterIcon />Stampa<Caret /></Btn>
          <Menu push>Ancora</Menu>
        </Toolbar>

        <Body>
          <Main>
            <Form>
              <LeftCol>
                <Label htmlFor="cliente">Cliente:</Label>
                <Field $w={513}>
                  <Select id="cliente"><option>INVIO CAMPIONI</option></Select>
                  <DropCell><Caret $big /></DropCell>
                  <CellButton aria-label="Apri cliente"><OpenIcon /></CellButton>
                </Field>
                <Unchecked href="#controllo">Non controllato</Unchecked>
                <Label htmlFor="base">Documento di base:</Label>
                <Field $w={513}><TextInput id="base" /><CellButton>...</CellButton></Field>
                <Line $indent><SoftButton aria-label="Compila da documento"><DocBackIcon /></SoftButton></Line>
                <Label htmlFor="ordine">Ordine:</Label>
                <Field $w={513}><TextInput id="ordine" /><CellButton>...</CellButton></Field>
                <Line $indent><SoftButton aria-label="Compila da ordine"><DocBackIcon /></SoftButton></Line>
                <Checks>
                  <CheckLabel><Check type="checkbox" />Acconto</CheckLabel>
                  <CheckLabel><Check type="checkbox" />Saldo</CheckLabel>
                </Checks>
              </LeftCol>
              <RightCol>
                <Label htmlFor="protocollo">Protocollo:</Label>
                <Line>
                  <Field $w={139} $light><TextInput id="protocollo" placeholder="<Auto>" /></Field>
                  <SoftButton $round $w={40}>#</SoftButton>
                  <Line $gap={7}>
                    <Label htmlFor="data">Data:</Label>
                    <Field $w={227}><TextInput id="data" defaultValue="26/03/2024 00:00:00" /><CellButton aria-label="Calendario"><MiniCalIcon /></CellButton></Field>
                  </Line>
                  <SoftButton $round $w={40} aria-label="Visualizza"><EyeIcon /></SoftButton>
                </Line>
                <Label htmlFor="tipo">Tipo documento:</Label>
                <Line>
                  <Field $w={513}><Select id="tipo"><option>TD01 - Fattura</option></Select><DropCell><Caret $big /></DropCell></Field>
                  <SoftButton $round><Mark>?</Mark></SoftButton>
                </Line>
                <Label htmlFor="magazzino">Magazzino:</Label>
                <Line>
                  <Field $w={513}>
                    <Select id="magazzino"><option>Magazzino Principale</option></Select>
                    <DropCell><Caret $big /></DropCell>
                    <CellButton aria-label="Apri magazzino"><OpenIcon /></CellButton>
                  </Field>
                  <Field $w={140}><Select $muted aria-label="Contenitore"><option>Contenitore ...</option></Select><DropCell><Caret $big /></DropCell></Field>
                </Line>
                <LinkRow>
                  <PlainLink href="#prezzi">EUR • LISTINO BASE • Soggetta ad IVA • Iva esclusa</PlainLink>
                  <CoGe>Co.Ge.:</CoGe>
                  <PlainLink href="#conti">210  07346, 210  07346</PlainLink>
                </LinkRow>
              </RightCol>
            </Form>

            <Tabs role="tablist">
              {tabs.map(([name, icon], i) => <Tab key={name} role="tab" aria-selected={i === 0} $on={i === 0}>{icon}{name}</Tab>)}
            </Tabs>
            <Panel>
              <Toolbar>
                <Btn>Aggiungi</Btn>
                <Pair $w={76} $h={33} $gap>
                  <PairButton aria-label="Sposta su"><ArrowVIcon /></PairButton>
                  <PairButton aria-label="Sposta giù"><ArrowVIcon down /></PairButton>
                </Pair>
                <IconBtn gap label="Codice a barre"><BarcodeIcon /></IconBtn>
                <Menu bold>Seleziona</Menu>
                <IconBtn label="Importa"><DownloadIcon /></IconBtn>
                <Menu>Compilare lotti</Menu>
                <Menu>Riserva</Menu>
                <Menu>Spese</Menu>
                <IconBtn label="Aggiorna ordine"><RefreshIcon cart /></IconBtn>
                <IconBtn gap label="Copia"><CopyIcon /></IconBtn>
                <IconBtn label="Incolla"><PasteIcon /></IconBtn>
                <IconBtn gap label="Aggiorna"><RefreshIcon /></IconBtn>
                <IconBtn label="Elenco"><ListIcon s={20} b={N} /></IconBtn>
                <IconBtn label="Carrello"><CartIcon s={18} b={N} /></IconBtn>
                <IconBtn label="Periodo"><CalendarIcon /></IconBtn>
                <IconBtn label="Imballo"><ParcelIcon /></IconBtn>
                <IconBtn label="Articoli"><BoxIcon s={18} b={N} /></IconBtn>
                <IconBtn label="Moduli"><BricksIcon /></IconBtn>
                <Menu>Modifica</Menu>
                <Menu>Ratei e risconti</Menu>
                <Menu push>Ancora</Menu>
              </Toolbar>
              <GridWrap>
                <Grid>
                  <Table>
                    <colgroup>{colWidths.map((w, i) => <col key={i} width={w} />)}</colgroup>
                    <thead>
                      <tr>{headers.map(h => <Th key={h} colSpan={h === "Imposta" ? 2 : 1}>{h}</Th>)}</tr>
                    </thead>
                    <tbody>
                      <tr>
                        <Td $right $first>1</Td><Td /><Td>Campione</Td><Td /><Td $right>1,000</Td><Td /><Td>CT</Td><Td $right>100,00</Td>
                        <Td /><Td /><Td>22%</Td><Td>..</Td><Td $right>22,00</Td><Td /><Td />
                        <Td><Check type="checkbox" aria-label="Omaggio" /></Td>
                        <Td $active><Check type="checkbox" aria-label="Rivalsa" defaultChecked /></Td><Td />
                      </tr>
                    </tbody>
                  </Table>
                  <HScroll>
                    <Tri d="M5 0v6L1 3Z" c="#bbb" />
                    <HTrack><HThumb /></HTrack>
                    <Tri d="M1 0v6l4-3Z" />
                  </HScroll>
                </Grid>
                <Ellipse />
              </GridWrap>
            </Panel>

            <Totals>
              <TotalsFrame>
                {totals.map(([name, value, w, bold]) => (
                  <Total key={name} $bold={bold}>{name}<TotalValue $w={w}>{value}</TotalValue></Total>
                ))}
                EUR
              </TotalsFrame>
            </Totals>
          </Main>
          <VScroll>
            <Tri d="M0 6h6L3 0Z" />
            <VTrack><VThumb /></VTrack>
            <Tri d="M0 0h6L3 6Z" c="#bbb" />
          </VScroll>
        </Body>
      </Page>
    </>
  );
}
